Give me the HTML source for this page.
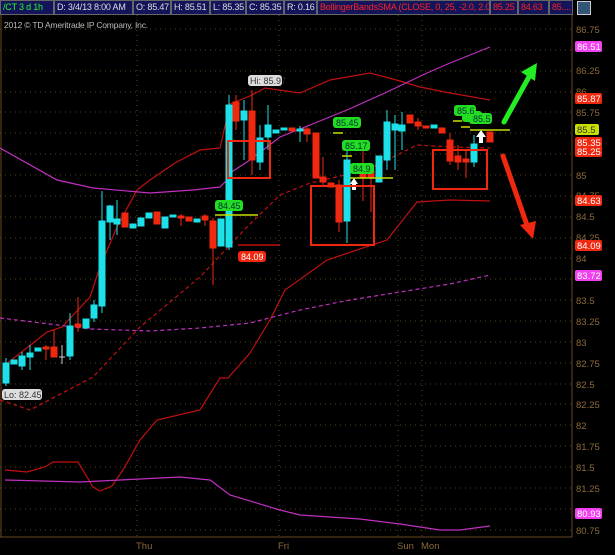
<!DOCTYPE html>
<html><head><style>
body{margin:0;background:#000;width:615px;height:555px;overflow:hidden;font-family:"Liberation Sans",sans-serif}
.hd{position:absolute;top:0;height:15px;background:#14145a;border:1px solid #666;box-sizing:border-box;font-size:9px;letter-spacing:-0.2px;line-height:13px;color:#ddd;padding-left:2px;white-space:nowrap;overflow:hidden}
</style></head><body>
<div class="hd" style="left:0;width:54px;color:#2f2">/CT 3 d 1h</div>
<div class="hd" style="left:54px;width:79px">D: 3/4/13 8:00 AM</div>
<div class="hd" style="left:133px;width:38px">O: 85.47</div>
<div class="hd" style="left:171px;width:39px">H: 85.51</div>
<div class="hd" style="left:210px;width:36px">L: 85.35</div>
<div class="hd" style="left:246px;width:38px">C: 85.35</div>
<div class="hd" style="left:284px;width:33px">R: 0.16</div>
<div class="hd" style="left:317px;width:173px;color:#f22">BollingerBandsSMA (CLOSE, 0, 25, -2.0, 2.0)</div>
<div class="hd" style="left:490px;width:28px;color:#f22">85.25</div>
<div class="hd" style="left:518px;width:31px;color:#f22">84.63</div>
<div class="hd" style="left:549px;width:24px;color:#f22">85....</div>
<div style="position:absolute;left:577px;top:1px;width:12px;height:12px;background:#357;border:1px solid #ccc"></div>
<div style="position:absolute;left:4px;top:20px;font-size:8.5px;color:#bbb;letter-spacing:-0.2px">2012 © TD Ameritrade IP Company, Inc.</div>
<svg width="615" height="555" style="position:absolute;left:0;top:0" font-family="Liberation Sans" font-size="9">
<g stroke="#5a4220" stroke-dasharray="1,4" stroke-width="1">
<line x1="0" y1="29" x2="572" y2="29"/><line x1="0" y1="50" x2="572" y2="50"/><line x1="0" y1="71" x2="572" y2="71"/><line x1="0" y1="92" x2="572" y2="92"/><line x1="0" y1="112" x2="572" y2="112"/><line x1="0" y1="133" x2="572" y2="133"/><line x1="0" y1="154" x2="572" y2="154"/><line x1="0" y1="175" x2="572" y2="175"/><line x1="0" y1="196" x2="572" y2="196"/><line x1="0" y1="217" x2="572" y2="217"/><line x1="0" y1="238" x2="572" y2="238"/><line x1="0" y1="258" x2="572" y2="258"/><line x1="0" y1="279" x2="572" y2="279"/><line x1="0" y1="300" x2="572" y2="300"/><line x1="0" y1="321" x2="572" y2="321"/><line x1="0" y1="342" x2="572" y2="342"/><line x1="0" y1="363" x2="572" y2="363"/><line x1="0" y1="384" x2="572" y2="384"/><line x1="0" y1="404" x2="572" y2="404"/><line x1="0" y1="425" x2="572" y2="425"/><line x1="0" y1="446" x2="572" y2="446"/><line x1="0" y1="467" x2="572" y2="467"/><line x1="0" y1="488" x2="572" y2="488"/><line x1="0" y1="509" x2="572" y2="509"/><line x1="0" y1="530" x2="572" y2="530"/>
<line x1="137" y1="15" x2="137" y2="537"/><line x1="279" y1="15" x2="279" y2="537"/><line x1="398" y1="15" x2="398" y2="537"/><line x1="422" y1="15" x2="422" y2="537"/>
</g>
<line x1="572" y1="15" x2="572" y2="537" stroke="#6a4a20"/><line x1="0" y1="537" x2="572" y2="537" stroke="#6a4a20"/>
<line x1="1" y1="15" x2="1" y2="537" stroke="#6a4a20"/>
<g fill="#8a6a3a" font-size="9.5">
<text x="576" y="33">86.75</text><text x="576" y="74">86.25</text><text x="576" y="95">86</text><text x="576" y="116">85.75</text><text x="576" y="179">85</text><text x="576" y="199">84.75</text><text x="576" y="220">84.5</text><text x="576" y="241">84.25</text><text x="576" y="262">84</text><text x="576" y="304">83.5</text><text x="576" y="325">83.25</text><text x="576" y="346">83</text><text x="576" y="367">82.75</text><text x="576" y="388">82.5</text><text x="576" y="408">82.25</text><text x="576" y="429">82</text><text x="576" y="450">81.75</text><text x="576" y="471">81.5</text><text x="576" y="492">81.25</text><text x="576" y="534">80.75</text>
<text x="136" y="549">Thu</text><text x="278" y="549">Fri</text><text x="397" y="549">Sun</text><text x="421" y="549">Mon</text>
</g>
<g fill="none" stroke-width="1.2">
<polyline stroke="#c01010" points="5,365 47,332 62,327 90,297 100,267 117,227 137,190 150,180 175,163 200,150 220,148 230,104 250,96 265,88 300,93 330,80 370,73 400,81 420,87 450,93 490,100"/>
<polyline stroke="#c01010" stroke-dasharray="4,3" points="0,400 30,410 93,377 140,327 200,277 247,227 280,195 310,183 367,170 393,157 417,145 450,147 490,148"/>
<polyline stroke="#c01010" points="5,470 27,472 45,467 53,462 78,462 93,487 100,491 112,486 123,470 140,440 157,420 200,410 220,378 228,378 250,353 270,320 285,290 327,260 387,240 417,202 450,200 490,201"/>
<polyline stroke="#c030c0" points="0,148 57,180 93,188 150,193 193,190 220,187 227,180 230,173 250,160 280,137 310,125 347,110 387,92 427,73 450,63 490,47"/>
<polyline stroke="#c030c0" stroke-dasharray="4,3" points="0,318 58,325 90,329 150,331 200,328 250,323 300,310 350,300 400,292 450,284 490,275"/>
<polyline stroke="#c030c0" points="5,480 80,482 140,479 180,477 210,480 230,495 280,510 300,515 330,517 360,519 400,524 440,530 460,530 490,526"/>
</g>
<g stroke-width="1">
<g fill="#1ee0e8" stroke="#1ee0e8">
<line x1="6" y1="358" x2="6" y2="386"/><rect x="3" y="363" width="6" height="20"/>
<rect x="11" y="360" width="6" height="4"/>
<line x1="22" y1="352" x2="22" y2="370"/><rect x="19" y="356" width="6" height="10"/>
<line x1="30" y1="345" x2="30" y2="370"/><rect x="27" y="353" width="6" height="4"/>
<rect x="35" y="348" width="6" height="3"/>
<line x1="70" y1="313" x2="70" y2="360"/><rect x="67" y="326" width="6" height="30"/>
<rect x="83" y="319" width="6" height="9"/>
<line x1="94" y1="300" x2="94" y2="322"/><rect x="91" y="305" width="6" height="13"/>
<line x1="102" y1="191" x2="102" y2="313"/><rect x="99" y="221" width="6" height="85"/>
<line x1="110" y1="205" x2="110" y2="240"/><rect x="107" y="206" width="6" height="16"/>
<line x1="117" y1="200" x2="117" y2="235"/><rect x="114" y="219" width="6" height="5"/>
<rect x="130" y="224" width="6" height="4"/>
<rect x="138" y="218" width="6" height="8"/>
<rect x="146" y="213" width="6" height="5"/>
<rect x="162" y="217" width="6" height="11"/>
<rect x="170" y="215" width="6" height="2"/>
<rect x="194" y="219" width="6" height="3"/>
<rect x="218" y="219" width="6" height="27"/>
<line x1="229" y1="95" x2="229" y2="250"/><rect x="226" y="105" width="6" height="142"/>
<line x1="244" y1="100" x2="244" y2="160"/><rect x="241" y="111" width="6" height="9"/>
<line x1="260" y1="125" x2="260" y2="170"/><rect x="257" y="138" width="6" height="24"/>
<line x1="268" y1="105" x2="268" y2="150"/><rect x="265" y="125" width="6" height="12"/>
<rect x="273" y="130" width="6" height="3"/>
<rect x="281" y="128" width="6" height="2"/>
<line x1="300" y1="126" x2="300" y2="142"/><rect x="297" y="129" width="6" height="2"/>
<line x1="347" y1="145" x2="347" y2="243"/><rect x="344" y="160" width="6" height="61"/>
<rect x="376" y="156" width="6" height="26"/>
<line x1="387" y1="110" x2="387" y2="170"/><rect x="384" y="122" width="6" height="38"/>
<line x1="395" y1="115" x2="395" y2="170"/><rect x="392" y="124" width="6" height="6"/>
<line x1="402" y1="112" x2="402" y2="150"/><rect x="399" y="125" width="6" height="6"/>
<rect x="431" y="125" width="6" height="3"/>
<line x1="474" y1="135" x2="474" y2="167"/><rect x="471" y="144" width="6" height="18"/>
</g>
<g fill="#f02810" stroke="#f02810">
<line x1="46" y1="345" x2="46" y2="360"/><rect x="43" y="347" width="6" height="2"/>
<line x1="54" y1="330" x2="54" y2="357"/><rect x="51" y="347" width="6" height="10"/>
<line x1="78" y1="297" x2="78" y2="332"/><rect x="75" y="324" width="6" height="3"/>
<rect x="122" y="213" width="6" height="14"/>
<rect x="154" y="212" width="6" height="12"/>
<line x1="181" y1="214" x2="181" y2="226"/><rect x="178" y="216" width="6" height="2"/>
<rect x="186" y="217" width="6" height="4"/>
<line x1="205" y1="214" x2="205" y2="226"/><rect x="202" y="216" width="6" height="4"/>
<line x1="213" y1="218" x2="213" y2="285"/><rect x="210" y="221" width="6" height="27"/>
<line x1="236" y1="95" x2="236" y2="130"/><rect x="233" y="102" width="6" height="19"/>
<line x1="252" y1="90" x2="252" y2="175"/><rect x="249" y="111" width="6" height="49"/>
<rect x="289" y="128" width="6" height="3"/>
<line x1="307" y1="127" x2="307" y2="142"/><rect x="304" y="129" width="6" height="5"/>
<rect x="313" y="133" width="6" height="45"/>
<line x1="323" y1="157" x2="323" y2="187"/><rect x="320" y="177" width="6" height="5"/>
<rect x="328" y="183" width="6" height="4"/>
<line x1="339" y1="180" x2="339" y2="232"/><rect x="336" y="185" width="6" height="37"/>
<line x1="363" y1="142" x2="363" y2="201"/><rect x="360" y="170" width="6" height="8"/>
<line x1="371" y1="165" x2="371" y2="212"/><rect x="368" y="171" width="6" height="6"/>
<rect x="407" y="115" width="6" height="8"/>
<line x1="418" y1="118" x2="418" y2="130"/><rect x="415" y="122" width="6" height="4"/>
<rect x="423" y="126" width="6" height="2"/>
<rect x="439" y="128" width="6" height="5"/>
<line x1="450" y1="133" x2="450" y2="165"/><rect x="447" y="140" width="6" height="21"/>
<line x1="458" y1="145" x2="458" y2="170"/><rect x="455" y="156" width="6" height="6"/>
<line x1="466" y1="150" x2="466" y2="178"/><rect x="463" y="159" width="6" height="3"/>
<rect x="487" y="132" width="6" height="10"/>
</g>
<line x1="62" y1="345" x2="62" y2="364" stroke="#ccc"/><line x1="59" y1="357" x2="65" y2="357" stroke="#ccc"/>
<polygon points="481,130 476,137 479,137 479,143 483,143 483,137 486,137" fill="#fff"/>
<polygon points="354,178 350,184 352,184 352,190 356,190 356,184 358,184" fill="#fff"/>
</g>
<g fill="none" stroke="#f02810" stroke-width="2">
<rect x="228" y="141" width="42" height="37"/><rect x="311" y="186" width="63" height="59"/><rect x="433" y="150" width="54" height="39"/>
</g>
<g stroke="#c8e000" stroke-width="1.5">
<line x1="215" y1="215" x2="258" y2="215"/><line x1="350" y1="178" x2="393" y2="178"/><line x1="470" y1="130" x2="510" y2="130"/>
<line x1="333" y1="133" x2="343" y2="133"/><line x1="342" y1="156" x2="352" y2="156"/><line x1="453" y1="121" x2="462" y2="121"/><line x1="461" y1="127" x2="470" y2="127"/>
</g>
<line x1="238" y1="245" x2="280" y2="245" stroke="#c01010" stroke-width="1.5"/>
<g font-size="9">
<rect x="248" y="75" width="34" height="11" rx="3" fill="#ddd"/><text x="250" y="84" fill="#333">Hi: 85.97</text>
<rect x="2" y="389" width="40" height="11" rx="3" fill="#ddd"/><text x="4" y="398" fill="#333">Lo: 82.45</text>
<g fill="#22dd22"><rect x="215" y="200" width="28" height="11" rx="3"/><rect x="333" y="117" width="28" height="11" rx="3"/><rect x="342" y="140" width="28" height="11" rx="3"/><rect x="350" y="163" width="24" height="11" rx="3"/><rect x="454" y="105" width="22" height="11" rx="3"/><rect x="462" y="111" width="20" height="11" rx="3"/><rect x="469" y="113" width="23" height="11" rx="3"/></g>
<g fill="#033"><text x="218" y="209">84.45</text><text x="336" y="126">85.45</text><text x="345" y="149">85.17</text><text x="353" y="172">84.9</text><text x="457" y="114">85.6</text><text x="473" y="122">85.5</text></g>
<rect x="238" y="251" width="28" height="11" rx="3" fill="#f02810"/><text x="241" y="260" fill="#fff">84.09</text>
</g>
<g stroke-linecap="round">
<line x1="504" y1="122" x2="530" y2="75" stroke="#22ee22" stroke-width="5"/>
<polygon points="537,63 521,72 535,81" fill="#22ee22"/>
<line x1="503" y1="156" x2="528" y2="228" stroke="#f02810" stroke-width="5"/>
<polygon points="533,239 520,225 536,221" fill="#f02810"/>
</g>
<g font-size="9.5">
<rect x="575" y="41" width="27" height="11" rx="2" fill="#f040f0"/><text x="577" y="50" fill="#fff">86.51</text>
<rect x="575" y="93" width="27" height="11" rx="2" fill="#f02810"/><text x="577" y="102" fill="#fff">85.87</text>
<rect x="575" y="124" width="24" height="11" rx="2" fill="#c8e000"/><text x="577" y="133" fill="#333">85.5</text>
<rect x="575" y="137" width="27" height="20" rx="2" fill="#f02810"/><text x="577" y="146" fill="#fff">85.35</text><text x="577" y="155" fill="#fff">85.25</text>
<rect x="575" y="195" width="27" height="11" rx="2" fill="#f02810"/><text x="577" y="204" fill="#fff">84.63</text>
<rect x="575" y="240" width="27" height="11" rx="2" fill="#f02810"/><text x="577" y="249" fill="#fff">84.09</text>
<rect x="575" y="270" width="27" height="11" rx="2" fill="#f040f0"/><text x="577" y="279" fill="#fff">83.72</text>
<rect x="575" y="508" width="27" height="11" rx="2" fill="#f040f0"/><text x="577" y="517" fill="#fff">80.93</text>
</g>
</svg>
</body></html>
